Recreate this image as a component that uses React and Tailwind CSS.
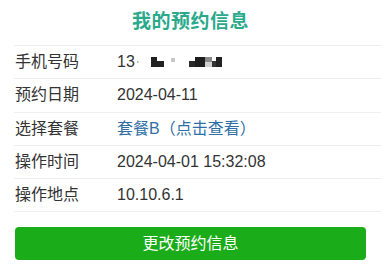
import React from 'react';

const rows = [
  { label: '手机号码', value: 'phone' },
  { label: '预约日期', value: '2024-04-11' },
  { label: '选择套餐', value: '套餐B（点击查看）', link: true },
  { label: '操作时间', value: '2024-04-01 15:32:08' },
  { label: '操作地点', value: '10.10.6.1' },
];

// mosaic that hides the middle of the phone number
const Mosaic = () => (
  <svg width="104" height="12" viewBox="0 0 104 12" className="block">
    <rect x="0" y="5" width="1.5" height="2" fill="#bbb" />
    <rect x="14" y="1" width="6" height="10" fill="#222" />
    <rect x="14" y="5" width="13" height="6" fill="#222" />
    <rect x="34" y="2" width="4" height="4" fill="#c8c8c8" />
    <rect x="52" y="5" width="10" height="6" fill="#2a2a2a" />
    <rect x="58" y="1" width="10" height="10" fill="#1e1e1e" />
    <rect x="68" y="1" width="7" height="5" fill="#8a8a8a" />
    <rect x="68" y="6" width="7" height="5" fill="#d0d0d0" />
    <rect x="75" y="5" width="4" height="6" fill="#333" />
    <rect x="79" y="1" width="6" height="10" fill="#222" />
  </svg>
);

export default function App() {
  return (
    <div
      className="w-[381px] h-[272px] bg-white overflow-hidden"
      style={{ fontFamily: '"Liberation Sans", "Noto Sans CJK SC", sans-serif' }}
    >
      {/* title */}
      <div className="h-[45px] flex items-center justify-center text-[19px] font-bold text-[#2aa98b] tracking-[0.5px]">
        我的预约信息
      </div>

      {/* info list */}
      <div className="ml-[14px] border-t border-[#eeeeee]">
        {rows.map((r) => (
          <div key={r.label} className="h-[33.3px] flex items-center border-b border-[#eeeeee] text-[16px]">
            <div className="w-[103px] pl-[1px] text-[#333333]">{r.label}</div>
            {r.value === 'phone' ? (
              <div className="flex items-center text-[#333333]">
                <span>13</span>
                <span className="ml-[2px]">
                  <Mosaic />
                </span>
              </div>
            ) : (
              <div className={r.link ? 'text-[#2f6fa6]' : 'text-[#333333]'}>{r.value}</div>
            )}
          </div>
        ))}
      </div>

      {/* action */}
      <div className="px-[15px] mt-[15px]">
        <button className="w-full h-[33px] rounded-[4px] bg-[#1aad19] text-white text-[16px] flex items-center justify-center">
          更改预约信息
        </button>
      </div>
    </div>
  );
}
